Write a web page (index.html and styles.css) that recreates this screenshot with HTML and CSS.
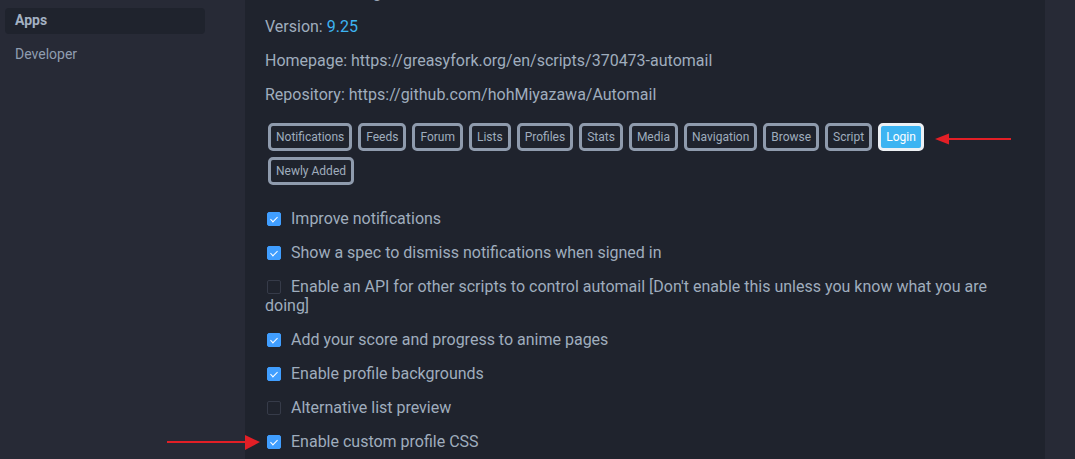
FILE: index.html
```html
<!DOCTYPE html>
<html>
<head>
<meta charset="utf-8">
<link rel="stylesheet" href="styles.css">
</head>
<body>
<div class="page">
  <aside class="sidebar">
    <div class="nav-item active">Apps</div>
    <div class="nav-item">Developer</div>
  </aside>
  <main class="panel">
    <p class="line head">Automail settings</p>
    <p class="line">Version: <span class="ver">9.25</span></p>
    <p class="line">Homepage: https://greasyfork.org/en/scripts/370473-automail</p>
    <p class="line">Repository: https://github.com/hohMiyazawa/Automail</p>
    <div class="cats">
      <span class="cat">Notifications</span>
      <span class="cat">Feeds</span>
      <span class="cat">Forum</span>
      <span class="cat">Lists</span>
      <span class="cat">Profiles</span>
      <span class="cat">Stats</span>
      <span class="cat">Media</span>
      <span class="cat">Navigation</span>
      <span class="cat">Browse</span>
      <span class="cat">Script</span>
      <span class="cat on">Login</span>
      <span class="cat">Newly Added</span>
    </div>
    <div class="opts">
      <div class="opt"><span class="cb checked"></span>Improve notifications</div>
      <div class="opt"><span class="cb checked"></span>Show a spec to dismiss notifications when signed in</div>
      <div class="opt"><span class="cb"></span>Enable an API for other scripts to control automail [Don't enable this unless you know what you are doing]</div>
      <div class="opt"><span class="cb checked"></span>Add your score and progress to anime pages</div>
      <div class="opt"><span class="cb checked"></span>Enable profile backgrounds</div>
      <div class="opt"><span class="cb"></span>Alternative list preview</div>
      <div class="opt"><span class="cb checked"></span>Enable custom profile CSS</div>
    </div>
  </main>
</div>
<svg class="arrow arrow-login" width="80" height="16" viewBox="0 0 80 16">
  <line x1="14" y1="8" x2="77" y2="8" stroke="#e21f26" stroke-width="2"/>
  <polygon points="1,8 15,2.5 15,13.5" fill="#e21f26"/>
</svg>
<svg class="arrow arrow-css" width="96" height="18" viewBox="0 0 96 18">
  <line x1="0" y1="8" x2="80" y2="8" stroke="#e21f26" stroke-width="2"/>
  <polygon points="93,8 78,1 78,16" fill="#e21f26"/>
</svg>
</body>
</html>
```

FILE: styles.css
```css
html, body {
  margin: 0;
  padding: 0;
  height: 100%;
  overflow: hidden;
}
body {
  background: #272a36;
  font-family: Roboto, "Liberation Sans", sans-serif;
  color: #9fadbd;
  position: relative;
}
.page {
  display: flex;
  height: 459px;
}
.sidebar {
  width: 235px;
  padding: 8px 5px;
  display: flex;
  flex-direction: column;
  gap: 8px;
}
.nav-item {
  width: 190px;
  height: 26px;
  line-height: 25px;
  padding-left: 10px;
  font-size: 14px;
  color: #8f9db0;
  border-radius: 4px;
}
.nav-item.active {
  background: #1f232d;
  font-weight: 700;
  color: #a3b1c2;
}
.panel {
  width: 760px;
  background: #1f232d;
  padding: 0 20px;
  font-size: 16px;
  line-height: 19px;
}
.line {
  margin: 0 0 15px;
}
.head {
  margin-top: -17px;
}
.ver {
  color: #3db4f2;
}
.cats {
  display: flex;
  flex-wrap: wrap;
  gap: 6px 6px;
  padding-left: 3px;
  margin-top: 19px;
  width: 700px;
}
.cat {
  display: inline-block;
  height: 22px;
  line-height: 22px;
  padding: 0 5px;
  border: 3px solid #8f9bad;
  border-radius: 5px;
  font-size: 12px;
  color: #9fadbd;
}
.cat.on {
  background: #3db4f2;
  border-color: #edf1f5;
  color: #ffffff;
}
.opts {
  margin-top: 24px;
}
.opt {
  margin-bottom: 15px;
}
.cb {
  display: inline-block;
  width: 14px;
  height: 14px;
  box-sizing: border-box;
  border: 1px solid #363b49;
  border-radius: 2px;
  margin: 0 10px 0 2px;
  vertical-align: -2px;
  position: relative;
}
.cb.checked {
  background: #409eff;
  border-color: #409eff;
}
.cb.checked::after {
  content: "";
  position: absolute;
  left: 3.5px;
  top: 1.5px;
  width: 3px;
  height: 6px;
  border: solid #ffffff;
  border-width: 0 1.5px 1.5px 0;
  transform: rotate(45deg);
}
.arrow {
  position: absolute;
}
.arrow-login {
  left: 934px;
  top: 131px;
}
.arrow-css {
  left: 167px;
  top: 434px;
}
```
